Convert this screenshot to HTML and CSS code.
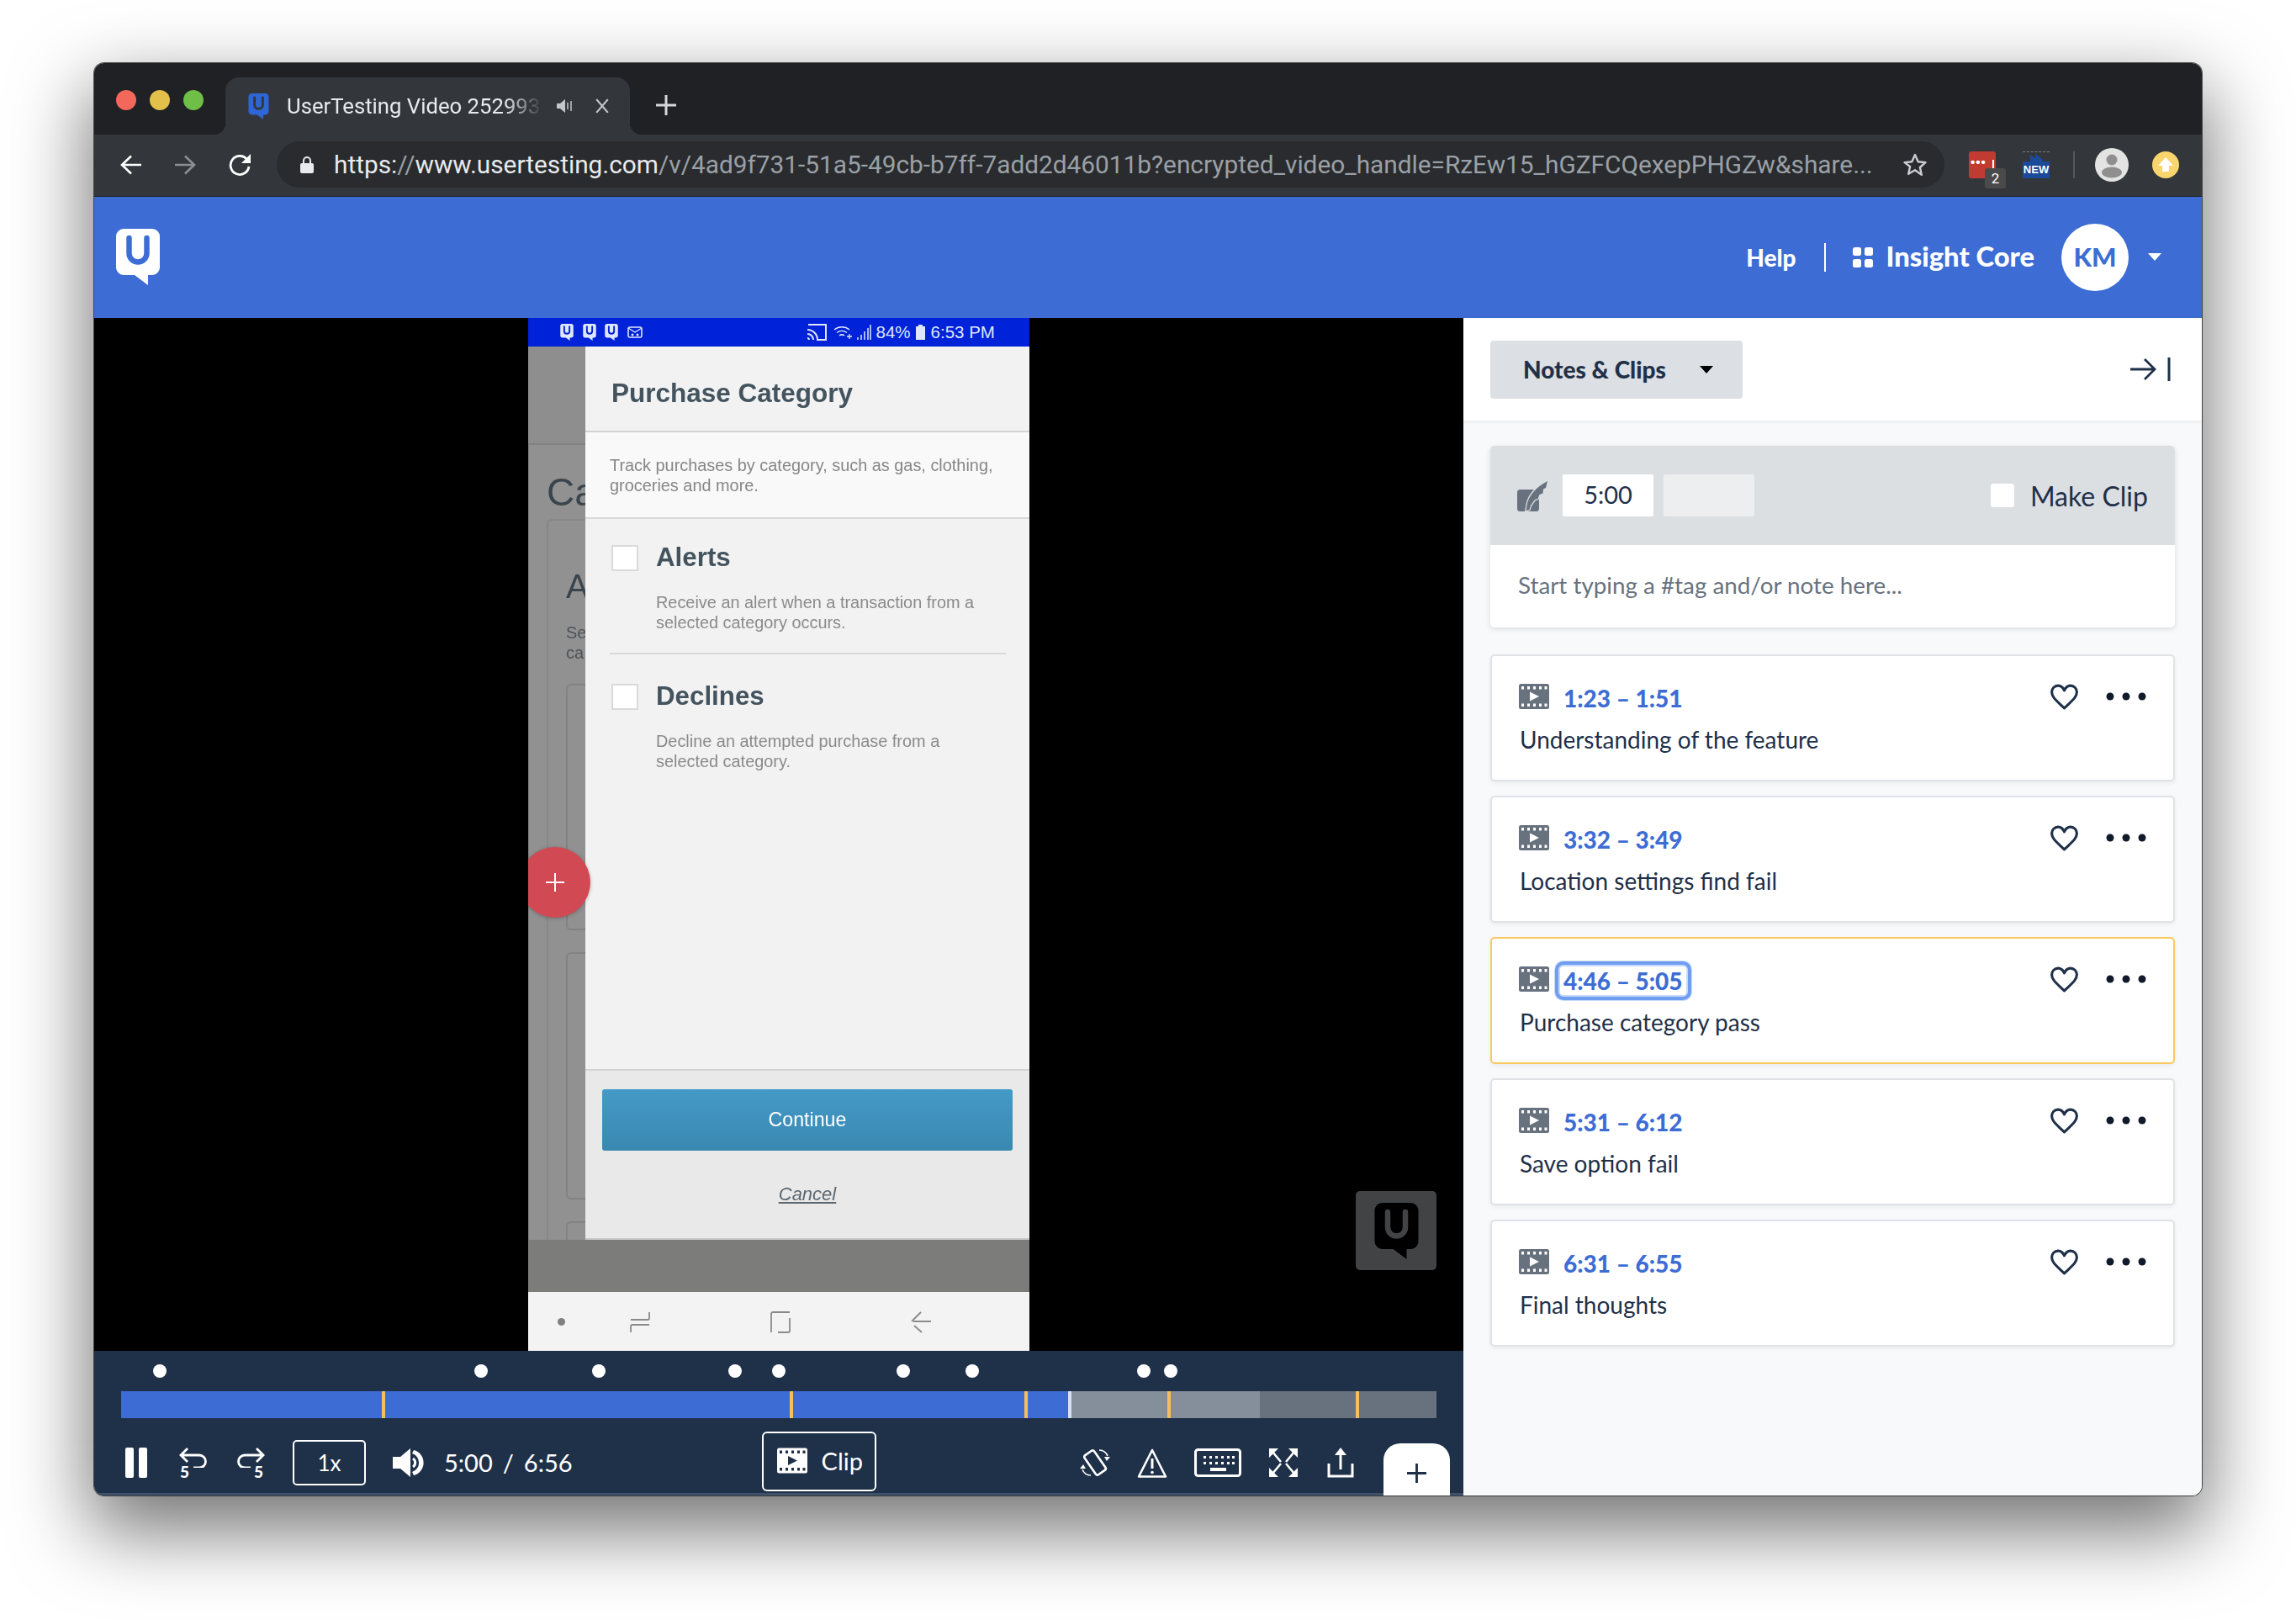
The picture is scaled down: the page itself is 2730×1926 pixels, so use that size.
FILE: index.html
```html
<!DOCTYPE html>
<html lang="en">
<head>
<meta charset="utf-8">
<title>UserTesting Video</title>
<link rel="stylesheet" href="styles.css">
</head>
<body>
<svg class="defs" width="0" height="0" aria-hidden="true">
  <symbol id="logo" viewBox="0 0 52 67">
    <path class="logo-body" d="M9 0H43A9 9 0 0 1 52 9V46A9 9 0 0 1 43 55H38V67L22 55H9A9 9 0 0 1 0 46V9A9 9 0 0 1 9 0Z"/>
    <path class="logo-u" d="M15.500 11V29A10.500 10.500 0 0 0 36.500 29V11"/>
  </symbol>
  <symbol id="film" viewBox="0 0 36 30">
    <rect width="36" height="30" rx="2.500" class="film-body"/>
    <path class="film-hole" d="M3 3h3v3.500H3zM10 3h3v3.500h-3zM17 3h3v3.500h-3zM24 3h3v3.500h-3zM30.500 3h3v3.500h-3zM3 23.500h3V27H3zM10 23.500h3V27h-3zM17 23.500h3V27h-3zM24 23.500h3V27h-3zM30.500 23.500h3V27h-3zM13 9.500l11 5.500-11 5.500z"/>
  </symbol>
  <symbol id="heart" viewBox="0 0 34 30">
    <path fill="none" stroke="#1f3049" stroke-width="3" stroke-linejoin="round" d="M17 28C10 21 2.500 16 2.500 9.500 2.500 5 6 2 9.800 2 13 2 15.500 4 17 7.500 18.500 4 21 2 24.200 2 28 2 31.500 5 31.500 9.500 31.500 16 24 21 17 28Z"/>
  </symbol>
  <symbol id="dots" viewBox="0 0 48 10">
    <circle cx="5" cy="5" r="4.500" fill="#101a2b"/><circle cx="24" cy="5" r="4.500" fill="#101a2b"/><circle cx="43" cy="5" r="4.500" fill="#101a2b"/>
  </symbol>
</svg>

<div class="window">
  <div class="tabstrip">
    <div class="lights"><i class="light red"></i><i class="light yellow"></i><i class="light green"></i></div>
    <div class="tab">
      <svg class="favicon"><use href="#logo"/></svg>
      <span class="tab-title">UserTesting Video 252993071</span>
      <svg class="tab-sound" viewBox="0 0 20 20"><path d="M0 7h4l6-5v16l-6-5H0z" fill="#c4c7cb"/><path d="M13 6v8M17 4v12" stroke="#c4c7cb" stroke-width="1.500"/></svg>
      <svg class="tab-close" viewBox="0 0 16 16"><path d="M2 1l12 14M14 1L2 15" stroke="#c4c7cb" stroke-width="2"/></svg>
    </div>
    <svg class="newtab" viewBox="0 0 24 24"><path d="M12 0v24M0 12h24" stroke="#d5d8db" stroke-width="3"/></svg>
  </div>

  <div class="toolbar">
    <svg class="nav-ic" viewBox="0 0 26 24"><path d="M25 12H3M13 1.500L2 12l11 10.500" fill="none" stroke="#fff" stroke-width="2.600"/></svg>
    <svg class="nav-ic dim" viewBox="0 0 26 24"><path d="M1 12h22M13 1.500L24 12 13 22.500" fill="none" stroke="#8b8f93" stroke-width="2.600"/></svg>
    <svg class="nav-ic" viewBox="0 0 28 26"><path d="M23 7A11 11 0 1 0 25 15" fill="none" stroke="#fff" stroke-width="2.800"/><path d="M27 0v11H16z" fill="#fff"/></svg>
    <div class="omnibox">
      <svg class="lock" viewBox="0 0 16 20"><path d="M4 8V5a4 4 0 0 1 8 0v3" fill="none" stroke="#e8eaed" stroke-width="2"/><rect y="8" width="16" height="12" rx="2" fill="#e8eaed"/></svg>
      <span class="url"><span class="url-w">https:</span>//<span class="url-w">www.usertesting.com</span>/v/4ad9f731-51a5-49cb-b7ff-7add2d46011b?encrypted_video_handle=RzEw15_hGZFCQexepPHGZw&amp;share...</span>
      <svg class="star" viewBox="0 0 30 30"><path d="M15 3l3.700 8.200 8.800.9-6.600 5.900 1.900 8.800L15 21.300 7.200 25.800 9.100 17 2.500 12.100l8.800-.9z" fill="none" stroke="#c9ccd0" stroke-width="2.400" stroke-linejoin="round"/></svg>
    </div>
    <div class="ext ext-red"><span class="ext-dots">•••</span><span class="ext-badge">2</span></div>
    <div class="ext ext-new"><svg class="new-peaks" viewBox="0 0 32 12"><path d="M8 12V3l7 5V2l9 7V12z" fill="#1b4a9a"/></svg><span class="new-label">NEW</span></div>
    <i class="tool-sep"></i>
    <div class="profile"><svg viewBox="0 0 40 40"><circle cx="20" cy="20" r="20" fill="#e3e3e3"/><circle cx="20" cy="14" r="6.500" fill="#8f8f8f"/><ellipse cx="20" cy="29" rx="12" ry="6.500" fill="#8f8f8f"/></svg></div>
    <div class="update"><svg viewBox="0 0 32 32"><circle cx="16" cy="16" r="16" fill="#f9d56e"/><path d="M16 7l9 10h-5v7h-8v-7H7z" fill="#fff"/></svg></div>
  </div>

  <header class="apphead">
    <svg class="applogo"><use href="#logo"/></svg>
    <nav class="appnav">
      <a class="help">Help</a>
      <i class="nav-sep"></i>
      <svg class="grid-ic" viewBox="0 0 24 24"><rect width="10" height="10" rx="2.500" fill="#fff"/><rect x="14" width="10" height="10" rx="2.500" fill="#fff"/><rect y="14" width="10" height="10" rx="2.500" fill="#fff"/><rect x="14" y="14" width="10" height="10" rx="2.500" fill="#fff"/></svg>
      <a class="core">Insight Core</a>
      <span class="avatar">KM</span>
      <i class="caret caret-white"></i>
    </nav>
  </header>

  <div class="main">
    <section class="player">
      <div class="stage">
        <div class="phone">
          <div class="status">
            <svg class="st-u"><use href="#logo"/></svg>
            <svg class="st-u"><use href="#logo"/></svg>
            <svg class="st-u"><use href="#logo"/></svg>
            <svg class="st-mail" viewBox="0 0 18 14"><rect x="1" y="1" width="16" height="12" rx="2" fill="none" stroke="#dfe6ff" stroke-width="1.600"/><path d="M1 2l8 5 8-5" fill="none" stroke="#dfe6ff" stroke-width="1.400"/><circle cx="6" cy="10" r="1.500" fill="#dfe6ff"/><circle cx="12" cy="10" r="1.500" fill="#dfe6ff"/></svg>
            <svg class="st-cast" viewBox="0 0 24 20"><path d="M2 1h21v18H12" fill="none" stroke="#dfe6ff" stroke-width="2"/><path d="M1 7a12 12 0 0 1 12 12M1 12a7 7 0 0 1 7 7M1 17a2 2 0 0 1 2 2" fill="none" stroke="#dfe6ff" stroke-width="2"/></svg>
            <svg class="st-wifi" viewBox="0 0 24 18"><path d="M1 6a14 14 0 0 1 18 0M4 9.500a10 10 0 0 1 12 0M7 13a5 5 0 0 1 6 0" fill="none" stroke="#dfe6ff" stroke-width="1.500"/><path d="M19 11v6M16 14h6" stroke="#dfe6ff" stroke-width="1.300"/></svg>
            <svg class="st-sig" viewBox="0 0 17 18"><path d="M1 18v-3M5 18v-6M9 18V8M13 18V4M16 18V0" stroke="#dfe6ff" stroke-width="1.500"/></svg>
            <span class="st-pct">84%</span>
            <svg class="st-bat" viewBox="0 0 11 18"><path d="M3 0h5v2h3v16H0V2h3z" fill="#dfe6ff"/></svg>
            <span class="st-time">6:53 PM</span>
          </div>
          <div class="screen">
            <div class="dimmed">
              <div class="dim-head"></div>
              <div class="dim-page">
                <div class="dim-title">Ca</div>
                <div class="dim-card">
                  <div class="dim-h">A</div>
                  <div class="dim-p">Se<br>ca</div>
                  <div class="dim-box dim-box1"></div>
                  <div class="dim-box dim-box2"></div>
                  <div class="dim-box dim-box3"></div>
                </div>
              </div>
            </div>
            <div class="dialog">
              <h2 class="dlg-title">Purchase Category</h2>
              <p class="dlg-desc">Track purchases by category, such as gas, clothing, groceries and more.</p>
              <div class="dlg-body">
                <div class="opt opt-a">
                  <i class="opt-check"></i>
                  <div><h3 class="opt-title">Alerts</h3><p class="opt-text">Receive an alert when a transaction from a selected category occurs.</p></div>
                </div>
                <div class="opt opt-b">
                  <i class="opt-check"></i>
                  <div><h3 class="opt-title">Declines</h3><p class="opt-text">Decline an attempted purchase from a selected category.</p></div>
                </div>
              </div>
              <div class="dlg-foot">
                <div class="continue">Continue</div>
                <a class="cancel">Cancel</a>
              </div>
            </div>
          </div>
          <div class="grayband"></div>
          <div class="softnav">
            <i class="sn-dot"></i>
            <svg class="sn-ic" viewBox="0 0 24 26"><path d="M23 1v7a2 2 0 0 1-2 2H1M1 25v-7a2 2 0 0 1 2-2h20" fill="none" stroke="#8a8a8a" stroke-width="1.800"/></svg>
            <svg class="sn-ic" viewBox="0 0 24 26"><path d="M23 1H3a2 2 0 0 0-2 2v22M9 25h12a2 2 0 0 0 2-2V8" fill="none" stroke="#8a8a8a" stroke-width="1.800"/></svg>
            <svg class="sn-ic" viewBox="0 0 24 26"><path d="M24 12H3M12 1L1 12M4 17l9 8" fill="none" stroke="#8a8a8a" stroke-width="1.800"/></svg>
          </div>
          <div class="fab"><svg viewBox="0 0 22 22"><path d="M11 0v22M0 11h22" stroke="#fff" stroke-width="2"/></svg></div>
        </div>
        <div class="watermark"><svg><use href="#logo"/></svg></div>
      </div>

      <div class="controls">
        <div class="markers">
          <i class="mk" style="left:46px"></i><i class="mk" style="left:428px"></i><i class="mk" style="left:568px"></i><i class="mk" style="left:730px"></i><i class="mk" style="left:782px"></i><i class="mk" style="left:930px"></i><i class="mk" style="left:1012px"></i><i class="mk" style="left:1216px"></i><i class="mk" style="left:1248px"></i>
        </div>
        <div class="track">
          <i class="seg seg-played"></i><i class="seg seg-head"></i><i class="seg seg-buf"></i><i class="seg seg-rest"></i>
          <i class="tick" style="left:310px"></i><i class="tick" style="left:795px"></i><i class="tick" style="left:1074px"></i><i class="tick" style="left:1244px"></i><i class="tick" style="left:1468px"></i>
        </div>
        <div class="ctl-row">
          <svg class="c-pause" viewBox="0 0 26 36"><rect width="10" height="36" rx="2" fill="#fff"/><rect x="16" width="10" height="36" rx="2" fill="#fff"/></svg>
          <div class="c-skip">
            <svg viewBox="0 0 34 24"><path d="M2 9h22a7 7 0 0 1 0 15h-7M10 1L2 9l8 8" fill="none" stroke="#fff" stroke-width="2.800"/></svg>
            <span class="skip-n skip-l">5</span>
          </div>
          <div class="c-skip c-skip-r">
            <svg viewBox="0 0 34 24"><path d="M32 9H10a7 7 0 0 0 0 15h7M24 1l8 8-8 8" fill="none" stroke="#fff" stroke-width="2.800"/></svg>
            <span class="skip-n skip-r">5</span>
          </div>
          <div class="c-speed">1x</div>
          <svg class="c-vol" viewBox="0 0 38 34"><path d="M0 10h9L21 0v34L9 24H0z" fill="#fff"/><path d="M24 12a6 6 0 0 1 0 10" fill="none" stroke="#fff" stroke-width="3"/><path d="M25 2a15.500 15.500 0 0 1 0 30l-2-4a11.500 11.500 0 0 0 0-22z" fill="#fff"/></svg>
          <span class="c-time">5:00</span><span class="c-slash">/</span><span class="c-time">6:56</span>
          <div class="c-clip"><svg class="clip-film"><use href="#film"/></svg><span>Clip</span></div>
          <svg class="c-ic c-rot" viewBox="0 0 36 34"><rect x="11" y="3" width="14" height="28" rx="2.500" transform="rotate(-35 18 17)" fill="none" stroke="#fff" stroke-width="2.600"/><path d="M23 2a11 11 0 0 1 10 7M13 32A11 11 0 0 1 3 25" fill="none" stroke="#fff" stroke-width="1.600"/><path d="M29 10h7l-4 5zM7 24H0l4-5z" fill="#fff"/></svg>
          <svg class="c-ic c-warn" viewBox="0 0 36 36"><path d="M18 3L34 34.500H2z" fill="none" stroke="#fff" stroke-width="2.600" stroke-linejoin="round"/><path d="M18 13v12" stroke="#fff" stroke-width="3"/><circle cx="18" cy="29.500" r="1.800" fill="#fff"/></svg>
          <svg class="c-ic c-key" viewBox="0 0 56 34"><rect x="1.500" y="1.500" width="53" height="31" rx="3" fill="none" stroke="#fff" stroke-width="3"/><path d="M11 9h3v3h-3zM18 9h3v3h-3zM25 9h3v3h-3zM32 9h3v3h-3zM39 9h3v3h-3zM45 9h3v3h-3zM11 16h3v3h-3zM18 16h3v3h-3zM25 16h3v3h-3zM32 16h3v3h-3zM39 16h3v3h-3zM45 16h3v3h-3zM19 23h19v4H19z" fill="#fff"/></svg>
          <svg class="c-ic c-exp" viewBox="0 0 36 36"><path d="M1 12V1h11zM35 12V1H24zM1 24v11h11zM35 24v11H24z" fill="#fff"/><path d="M5 5l10 12M31 5L21 17M5 31l10-12M31 31L21 19" stroke="#fff" stroke-width="2.600"/></svg>
          <svg class="c-ic c-share" viewBox="0 0 32 36"><path d="M2 19v15h28V19" fill="none" stroke="#fff" stroke-width="3"/><path d="M16 26V5" stroke="#fff" stroke-width="3"/><path d="M16 0l7 9H9z" fill="#fff"/></svg>
          <div class="c-plus"><svg viewBox="0 0 24 24"><path d="M12 0v24M0 12h24" stroke="#1f3049" stroke-width="3"/></svg></div>
        </div>
      </div>
    </section>

    <aside class="side">
      <div class="side-head">
        <div class="select"><span>Notes &amp; Clips</span><i class="caret caret-black"></i></div>
        <svg class="collapse" viewBox="0 0 50 28"><path d="M0 14h28M17 2l12 12-12 12" fill="none" stroke="#1f3049" stroke-width="2.800"/><path d="M46 0v28" stroke="#1f3049" stroke-width="3"/></svg>
      </div>
      <div class="side-body">
        <div class="note">
          <div class="note-top">
            <svg class="quill" viewBox="0 0 36 36"><rect y="10" width="26" height="26" rx="3.500" fill="#68727f"/><path d="M36 0l-2 8-3 1.500-.5 5-4 1.500-2 5-3.500 1-5 7-1.500 5-4 1 1-6C13 17 23 7 36 0z" fill="#68727f" stroke="#dcdfe2" stroke-width="2.500" paint-order="stroke"/></svg>
            <span class="tbox">5:00</span>
            <span class="tbox tbox-empty"></span>
            <span class="mc-check"></span>
            <span class="mc-label">Make Clip</span>
          </div>
          <div class="note-input">Start typing a #tag and/or note here...</div>
        </div>
        <div class="clips">
          <article class="clip">
            <div class="clip-top"><svg class="film-ic"><use href="#film"/></svg><a class="clip-time">1:23 – 1:51</a><svg class="heart"><use href="#heart"/></svg><svg class="dots"><use href="#dots"/></svg></div>
            <p class="clip-label">Understanding of the feature</p>
          </article>
          <article class="clip">
            <div class="clip-top"><svg class="film-ic"><use href="#film"/></svg><a class="clip-time">3:32 – 3:49</a><svg class="heart"><use href="#heart"/></svg><svg class="dots"><use href="#dots"/></svg></div>
            <p class="clip-label">Location settings find fail</p>
          </article>
          <article class="clip clip-active">
            <div class="clip-top"><svg class="film-ic"><use href="#film"/></svg><a class="clip-time focus">4:46 – 5:05</a><svg class="heart"><use href="#heart"/></svg><svg class="dots"><use href="#dots"/></svg></div>
            <p class="clip-label">Purchase category pass</p>
          </article>
          <article class="clip">
            <div class="clip-top"><svg class="film-ic"><use href="#film"/></svg><a class="clip-time">5:31 – 6:12</a><svg class="heart"><use href="#heart"/></svg><svg class="dots"><use href="#dots"/></svg></div>
            <p class="clip-label">Save option fail</p>
          </article>
          <article class="clip">
            <div class="clip-top"><svg class="film-ic"><use href="#film"/></svg><a class="clip-time">6:31 – 6:55</a><svg class="heart"><use href="#heart"/></svg><svg class="dots"><use href="#dots"/></svg></div>
            <p class="clip-label">Final thoughts</p>
          </article>
        </div>
      </div>
    </aside>
  </div>
</div>
</body>
</html>
```
FILE: styles.css
```css
* { box-sizing: border-box; }
html, body { margin: 0; padding: 0; }
body {
  width: 2730px;
  height: 1926px;
  padding: 75px 112px 0;
  background: #fff;
  font-family: Lato, "Open Sans", sans-serif;
  overflow: hidden;
}
.defs { position: absolute; }
i { display: block; font-style: normal; }
svg { display: block; flex: none; }
h2, h3, p { margin: 0; }

.logo-body { fill: var(--logo, #fff); }
.logo-u { fill: none; stroke: var(--logo-u, #3d6dd4); stroke-width: 6.500; stroke-linecap: round; }
.film-body { fill: var(--film, #68727f); }
.film-hole { fill: var(--film-h, #fff); }

.window {
  width: 2506px;
  height: 1703px;
  display: flex;
  flex-direction: column;
  border-radius: 12px;
  overflow: hidden;
  background: #fff;
  box-shadow: 0 0 0 1px rgba(30, 30, 30, .75), 0 36px 90px 6px rgba(0, 0, 0, .55);
}

/* browser chrome */
.tabstrip {
  height: 85px;
  flex: none;
  background: #202124;
  display: flex;
  align-items: flex-end;
}
.lights { display: flex; gap: 16px; padding: 0 26px 29px 26px; align-self: flex-end; width: 156px; }
.light { width: 24px; height: 24px; border-radius: 50%; }
.red { background: #f4685c; }
.yellow { background: #e3bf4c; }
.green { background: #6fbe47; }
.tab {
  position: relative;
  width: 481px;
  height: 68px;
  background: #33373b;
  border-radius: 16px 16px 0 0;
  display: flex;
  align-items: center;
  padding: 0 0 0 27px;
}
.tab::before, .tab::after {
  content: "";
  position: absolute;
  bottom: 0;
  width: 14px;
  height: 14px;
}
.tab::before { left: -14px; background: radial-gradient(circle at 0 0, transparent 14px, #33373b 14.500px); }
.tab::after { right: -14px; background: radial-gradient(circle at 100% 0, transparent 14px, #33373b 14.500px); }
.favicon { width: 25px; height: 31px; --logo: #2f66d6; --logo-u: #33373b; }
.tab-title {
  width: 304px;
  margin-left: 21px;
  color: #e8eaed;
  font: 400 25.700px Roboto, sans-serif;
  white-space: nowrap;
  overflow: hidden;
  -webkit-mask-image: linear-gradient(90deg, #000 85%, transparent);
  mask-image: linear-gradient(90deg, #000 85%, transparent);
}
.tab-sound { width: 20px; height: 20px; margin-left: 17px; }
.tab-close { width: 18px; height: 18px; margin-left: 25px; }
.newtab { width: 24px; height: 24px; margin: 0 0 23px 31px; }

.toolbar {
  height: 74px;
  flex: none;
  background: #33373b;
  border-bottom: 1px solid #202124;
  display: flex;
  align-items: center;
  padding-left: 31px;
  padding-bottom: 2px;
}
.nav-ic { width: 26px; height: 24px; margin-right: 38px; }
.nav-ic:nth-child(3) { margin-right: 30px; width: 28px; height: 26px; }
.omnibox {
  width: 1983px;
  height: 55px;
  background: #292b2e;
  border-radius: 28px;
  display: flex;
  align-items: center;
  padding-left: 28px;
}
.lock { width: 16px; height: 20px; }
.url {
  width: 1860px;
  margin-left: 24px;
  font: 400 29.800px Roboto, sans-serif;
  color: #9aa0a6;
  white-space: nowrap;
  overflow: hidden;
}
.url-w { color: #e8eaed; }
.star { width: 30px; height: 30px; margin-left: 5px; }
.ext { width: 32px; height: 32px; position: relative; border-radius: 3px; flex: none; }
.ext-red { margin-left: 29px; background: #c23b33; }
.ext-red::after { content: ""; position: absolute; left: 28px; top: 10px; width: 2px; height: 11px; background: #fff; }
.ext-dots { display: block; color: #fff; font: 700 15px/26px "Liberation Sans", sans-serif; letter-spacing: 1px; padding-left: 2px; }
.ext-badge {
  position: absolute;
  z-index: 1;
  left: 19px;
  top: 20px;
  width: 25px;
  height: 24px;
  background: #4a4a4a;
  border-radius: 3px;
  color: #fff;
  font: 400 17px/24px Roboto, sans-serif;
  text-align: center;
}
.ext-new {
  margin-left: 32px;
  border-top: 1px dashed #7b7e82;
  border-radius: 0;
  display: flex;
  flex-direction: column;
}
.new-peaks { width: 32px; height: 11px; }
.new-label {
  height: 20px;
  background: #1b4a9a;
  color: #fff;
  font: 700 13px/20px "Liberation Sans", sans-serif;
  text-align: center;
  white-space: nowrap;
}
.tool-sep { width: 2px; height: 32px; background: #55585c; margin-left: 28px; }
.profile { width: 40px; height: 40px; margin-left: 24px; }
.update { width: 32px; height: 32px; margin-left: 28px; }

/* app header */
.apphead {
  height: 144px;
  flex: none;
  background: #3d6dd4;
  display: flex;
  align-items: center;
  padding-left: 26px;
  padding-right: 48px;
  justify-content: space-between;
}
.applogo { width: 52px; height: 67px; margin-top: -1px; }
.appnav { display: flex; align-items: center; color: #fff; }
.help { font-size: 28px; font-weight: 900; }
.nav-sep { width: 2px; height: 34px; background: #fff; margin: 0 32px 0 33px; }
.grid-ic { width: 24px; height: 24px; }
.core { font-size: 32.700px; font-weight: 900; margin-left: 16px; margin-top: -3px; }
.avatar {
  width: 80px;
  height: 80px;
  border-radius: 50%;
  background: #fff;
  color: #3d6dd4;
  font-size: 31px;
  font-weight: 900;
  text-align: center;
  line-height: 78px;
  margin-left: 32px;
  margin-right: 23px;
}
.caret { width: 0; height: 0; border-style: solid; border-color: transparent; }
.caret-white { border-width: 9px 8.500px 0; border-top-color: #fff; margin-top: -2px; }

/* main */
.main { flex: 1; display: flex; min-height: 0; }
.player { width: 1628px; flex: none; display: flex; flex-direction: column; }
.stage {
  height: 1228px;
  flex: none;
  background: #000;
  position: relative;
  display: flex;
  justify-content: center;
}
.phone {
  width: 596px;
  height: 1228px;
  position: relative;
  display: flex;
  flex-direction: column;
  overflow: hidden;
}
.status {
  height: 34px;
  flex: none;
  background: #0022d8;
  display: flex;
  align-items: center;
  color: #dfe6ff;
  font: 400 20.500px "Liberation Sans", sans-serif;
  padding-left: 38px;
  --logo: #dfe6ff;
  --logo-u: #0022d8;
}
.st-u { width: 16px; height: 20px; margin-right: 10.500px; }
.st-mail { width: 18px; height: 14px; }
.st-cast { width: 24px; height: 20px; margin-left: 195px; }
.st-wifi { width: 24px; height: 18px; margin-left: 8px; }
.st-sig { width: 17px; height: 18px; margin-left: 4px; }
.st-pct { margin-left: 6px; }
.st-bat { width: 11px; height: 18px; margin-left: 6px; }
.st-time { margin-left: 7px; }

.screen { height: 1062px; flex: none; display: flex; filter: blur(.4px); }
.dimmed { width: 68px; flex: none; background: #8e8e8e; overflow: hidden; display: flex; flex-direction: column; }
.dim-head { height: 117px; flex: none; border-bottom: 2px solid #828282; }
.dim-page {
  flex: 1;
  border-left: 1px solid #808080;
  background: #919191;
  margin-right: -80px;
  padding-left: 21px;
}
.dim-title { font: 400 46px/48px "Liberation Sans", sans-serif; color: #39444c; margin-top: 32px; white-space: nowrap; }
.dim-card { margin-top: 8px; border: 2px solid #878787; border-radius: 6px; padding: 56px 20px 0 21px; height: 900px; }
.dim-h { font: 400 40px/44px "Liberation Sans", sans-serif; color: #39444c; }
.dim-p { font: 400 20px/24px "Liberation Sans", sans-serif; color: #4d5358; margin-top: 21px; }
.dim-box { border: 2px solid #828282; border-radius: 6px; margin-bottom: 26px; width: 200px; }
.dim-box1 { height: 293px; margin-top: 25px; }
.dim-box2 { height: 294px; }
.dim-box3 { height: 60px; }

.dialog { width: 528px; flex: none; background: #f2f2f2; display: flex; flex-direction: column; font-family: "Liberation Sans", sans-serif; }
.dlg-title {
  height: 102px;
  flex: none;
  border-bottom: 2px solid #d3d3d3;
  padding: 0 0 0 31px;
  font-size: 31.500px;
  font-weight: 700;
  line-height: 110px;
  color: #44545f;
}
.dlg-desc {
  height: 103px;
  flex: none;
  background: #f9f9f9;
  border-bottom: 2px solid #d8d8d8;
  padding: 28px 24px 0 29px;
  font-size: 19.900px;
  line-height: 23.500px;
  color: #868686;
}
.dlg-body { flex: 1; }
.opt { display: flex; margin: 0 28px 0 29px; padding-left: 2px; }
.opt-a { padding-top: 30px; height: 161px; border-bottom: 2px solid #d8d8d8; }
.opt-b { padding-top: 34px; }
.opt-check { width: 32px; height: 31px; background: #fff; border: 2px solid #dadada; margin-top: 1px; flex: none; }
.opt-title { font-size: 31.300px; line-height: 32px; color: #44545f; margin-left: 21px; }
.opt-text { font-size: 19.900px; line-height: 23.500px; color: #8a8a8a; margin: 26px 0 0 21px; width: 410px; }
.dlg-foot {
  height: 203px;
  flex: none;
  background: #e9e9e9;
  border-top: 2px solid #d3d3d3;
  border-bottom: 2px solid #c9c9c9;
  padding: 22px 20px 0;
  text-align: center;
}
.continue {
  height: 73px;
  border-radius: 3px;
  background: linear-gradient(#449ac6, #3a88b2);
  color: #fff;
  font-size: 23.200px;
  line-height: 72px;
}
.cancel { display: block; margin-top: 39px; font-size: 22px; font-style: italic; text-decoration: underline; color: #5c6770; line-height: 26px; }
.grayband { height: 62px; flex: none; background: #7c7c7a; }
.softnav {
  height: 70px;
  flex: none;
  background: #f3f3f3;
  display: flex;
  align-items: center;
  padding-left: 35px;
  gap: 143px;
}
.sn-dot { width: 9px; height: 9px; border-radius: 50%; background: #808080; margin-right: -66px; }
.sn-ic { width: 24px; height: 26px; margin-top: 2px; }
.fab {
  position: absolute;
  left: -10px;
  top: 629px;
  width: 84px;
  height: 84px;
  border-radius: 50%;
  background: #d14a53;
  display: flex;
  align-items: center;
  justify-content: center;
  box-shadow: 0 1px 4px rgba(0,0,0,.25);
}
.fab svg { width: 22px; height: 22px; }
.watermark {
  position: absolute;
  right: 32px;
  bottom: 96px;
  width: 96px;
  height: 94px;
  background: #424344;
  border-radius: 5px;
  display: flex;
  align-items: center;
  justify-content: center;
  --logo: #000;
  --logo-u: #424344;
}
.watermark svg { width: 53px; height: 67px; }

/* controls */
.controls {
  flex: 1;
  background: #1f3049;
  padding: 0 32px;
  display: flex;
  flex-direction: column;
  box-shadow: inset 0 -3px 0 #3f5069;
}
.markers { height: 48px; flex: none; position: relative; }
.mk { position: absolute; top: 16px; width: 16px; height: 16px; margin-left: -8px; border-radius: 50%; background: #fff; }
.track { height: 32px; flex: none; display: flex; position: relative; }
.seg { height: 100%; }
.seg-played { width: 1126px; background: #3d6dd4; }
.seg-head { width: 4px; background: #d6e0f5; }
.seg-buf { width: 224px; background: #858f9b; }
.seg-rest { flex: 1; background: #68727f; }
.tick { position: absolute; top: 0; width: 4px; height: 32px; background: #f7bf57; }
.ctl-row { flex: 1; display: flex; align-items: center; padding: 14px 0 0 5px; margin-right: -16px; position: relative; color: #fff; }
.c-pause { width: 26px; height: 36px; }
.c-skip { width: 34px; height: 36px; margin-left: 38px; position: relative; flex: none; }
.c-skip svg { width: 34px; height: 24px; }
.c-skip-r { margin-left: 34px; }
.skip-n { position: absolute; bottom: -3px; font-size: 19px; font-weight: 900; line-height: 20px; }
.skip-l { left: 1px; }
.skip-r { right: 2px; }
.c-speed {
  width: 87px;
  height: 54px;
  margin-left: 33px;
  border: 2px solid #fff;
  border-radius: 5px;
  text-align: center;
  font-size: 26px;
  line-height: 50px;
  flex: none;
}
.c-vol { width: 38px; height: 34px; margin-left: 32px; }
.c-time { font-size: 29px; margin-top: -2px; }
.c-time:first-of-type { margin-left: 23px; }
.c-slash { font-size: 29px; margin: -2px 12px 0; }
.c-clip {
  width: 136px;
  height: 71px;
  margin-left: 225px;
  margin-top: -3px;
  border: 2px solid #fff;
  border-radius: 6px;
  display: flex;
  align-items: center;
  padding: 0 0 2px 16px;
  font-size: 29px;
  flex: none;
  --film: #fff;
  --film-h: #1f3049;
}
.clip-film { width: 36px; height: 31px; margin-right: 17px; }
.c-ic { height: 36px; }
.c-rot { width: 36px; margin-left: 242px; }
.c-warn { width: 36px; margin-left: 32px; }
.c-key { width: 56px; height: 34px; margin-left: 32px; }
.c-exp { width: 36px; margin-left: 32px; }
.c-share { width: 32px; margin-left: 34px; }
.c-plus {
  position: absolute;
  right: 0;
  bottom: 0;
  width: 79px;
  height: 62px;
  background: #fff;
  border-radius: 20px 20px 0 0;
  padding: 24px 0 0 28px;
}
.c-plus svg { width: 23px; height: 23px; }

/* sidebar */
.side { flex: 1; display: flex; flex-direction: column; background: #f8f9fb; min-width: 0; color: #1f3049; }
.side-head {
  height: 122px;
  flex: none;
  background: #fff;
  box-shadow: 0 1px 5px rgba(0, 0, 0, .08);
  display: flex;
  align-items: center;
  justify-content: space-between;
  padding: 0 35px 0 32px;
}
.select {
  width: 300px;
  height: 69px;
  background: #dcdfe3;
  border-radius: 4px;
  display: flex;
  align-items: center;
  justify-content: space-between;
  padding: 0 35px 0 39px;
  font-size: 28px;
  font-weight: 900;
}
.caret-black { border-width: 9px 8.500px 0; border-top-color: #000; }
.collapse { width: 50px; height: 28px; }
.side-body { flex: 1; padding: 30px 32px 0; }
.note {
  height: 216px;
  border-radius: 5px;
  overflow: hidden;
  background: #fff;
  box-shadow: 0 2px 6px rgba(0, 0, 0, .12);
}
.note-top {
  height: 118px;
  background: #dcdfe2;
  display: flex;
  align-items: center;
  padding: 0 32px 0 32px;
}
.quill { width: 36px; height: 36px; margin-top: 2px; }
.tbox { width: 108px; height: 50px; background: #fff; border-radius: 2px; margin-left: 18px; text-align: center; font-size: 29px; line-height: 48px; }
.tbox-empty { background: #edeef0; margin-left: 12px; }
.mc-check { width: 28px; height: 28px; background: #fff; border-radius: 3px; margin-left: auto; margin-right: -1px; }
.mc-label { font-size: 32px; margin-left: 20px; }
.note-input { padding: 0 33px; height: 96px; line-height: 96px; font-size: 27.800px; color: #68727f; }
.clips { display: flex; flex-direction: column; gap: 17px; margin-top: 32px; }
.clip {
  height: 151px;
  background: #fff;
  border: 2px solid #dfe2e6;
  border-radius: 5px;
  box-shadow: 0 2px 5px rgba(0, 0, 0, .06);
  padding: 32px 32px 0 33px;
}
.clip-active { border-color: #fbc960; }
.clip-top { display: flex; align-items: center; height: 32px; }
.film-ic { width: 36px; height: 30px; margin-left: -1px; }
.clip-time { margin-left: 17px; margin-top: 4px; font-size: 28px; font-weight: 900; color: #3d6dd4; }
.focus {
  margin-left: 13px;
  padding: 0 4px;
  border-radius: 4px;
  outline: 4px solid #6f9df2;
  box-shadow: 0 0 0 7px #c6d9fa;
  outline-offset: 2px;
  line-height: 34px;
}
.heart { width: 35px; height: 31px; margin-left: auto; }
.dots { width: 48px; height: 10px; margin-left: 32px; }
.clip-label { margin-top: 18px; font-size: 28px; line-height: 34px; }
```
